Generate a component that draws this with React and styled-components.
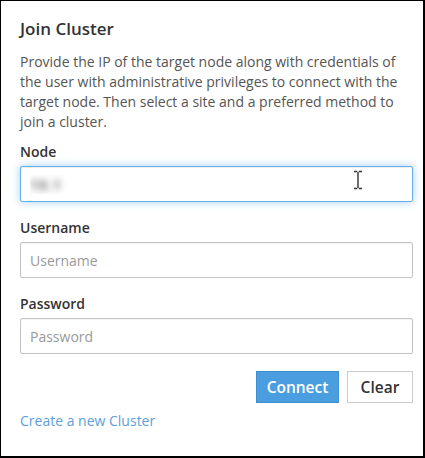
import styled, { createGlobalStyle } from 'styled-components';

const GlobalStyle = createGlobalStyle`
  html, body {
    margin: 0;
    padding: 0;
    background: #fff;
  }
  body {
    font-family: "Open Sans", "Liberation Sans", sans-serif;
  }
  * {
    box-sizing: border-box;
  }
`

const Panel = styled.div`
  width: 425px;
  height: 458px;
  border: 1px solid #000;
  border-right-width: 2px;
  border-bottom-width: 2px;
  padding: 16px 10px 0 19px;
  background: #fff;
  color: #333;
`

const Title = styled.h4`
  margin: 0 0 11px;
  font-size: 17px;
  line-height: 24px;
  font-weight: 600;
  color: #333;
`

const Intro = styled.p`
  margin: 0 0 10px;
  font-size: 14px;
  line-height: 20px;
  color: #555;
`

const Group = styled.div`
  position: relative;
  margin-top: ${p => (p.$first ? '0' : '16px')};
`

const Label = styled.label`
  display: block;
  margin-bottom: 4px;
  font-size: 14px;
  line-height: 20px;
  font-weight: 600;
  color: #333;
`

const Input = styled.input`
  display: block;
  width: 100%;
  height: 36px;
  padding: 6px 9px;
  font-family: inherit;
  font-size: 14px;
  color: #555;
  background: #fff;
  border: 1px solid ${p => (p.$focused ? '#66afe9' : '#c4c4c4')};
  border-radius: 2px;
  outline: none;
  box-shadow: ${p =>
    p.$focused
      ? 'inset 0 1px 1px rgba(0,0,0,.075), 0 0 8px rgba(102,175,233,.6)'
      : 'inset 0 1px 1px rgba(0,0,0,.05)'};
  ${p => p.$masked && `
    color: transparent;
    font-weight: 700;
    letter-spacing: 1px;
    text-shadow: 0 0 7px rgba(0,0,0,.55);
  `}

  &::placeholder {
    color: #999;
  }
`

const Caret = styled.svg`
  position: absolute;
  left: 333px;
  top: 28px;
  pointer-events: none;
`

const Actions = styled.div`
  display: flex;
  justify-content: flex-end;
  gap: 8px;
  margin-top: 17px;
`

const Button = styled.button`
  width: ${p => (p.$primary ? '83px' : '66px')};
  height: 32px;
  padding: 0;
  font-family: inherit;
  font-size: 15.5px;
  font-weight: 600;
  border-radius: 0;
  cursor: pointer;
  color: ${p => (p.$primary ? '#fff' : '#333')};
  background: ${p => (p.$primary ? '#4a9ddf' : '#fff')};
  border: 1px solid ${p => (p.$primary ? '#3d8fd0' : '#ccc')};
`

const Link = styled.a`
  display: inline-block;
  margin-top: 8px;
  font-size: 14px;
  line-height: 20px;
  color: #5c9fd9;
  text-decoration: none;
`

const App = () => {
  return (
    <>
      <GlobalStyle />
      <Panel>
        <Title>Join Cluster</Title>
        <Intro>
          Provide the IP of the target node along with credentials of the user with
          administrative privileges to connect with the target node. Then select a site
          and a preferred method to join a cluster.
        </Intro>
        <Group $first>
          <Label>Node</Label>
          <Input $focused $masked defaultValue="10.1" />
          <Caret width="10" height="20" viewBox="0 0 10 20">
            <path
              d="M1 1.5h3M6 1.5h3M5 2v16M1 18.5h3M6 18.5h3"
              stroke="#fff"
              strokeWidth="3"
              fill="none"
            />
            <path
              d="M1 1.5h3.2M5.8 1.5h3.2M5 2v16M1 18.5h3.2M5.8 18.5h3.2"
              stroke="#333"
              strokeWidth="1.4"
              fill="none"
            />
          </Caret>
        </Group>
        <Group>
          <Label>Username</Label>
          <Input placeholder="Username" />
        </Group>
        <Group>
          <Label>Password</Label>
          <Input type="password" placeholder="Password" />
        </Group>
        <Actions>
          <Button $primary>Connect</Button>
          <Button>Clear</Button>
        </Actions>
        <Link href="#">Create a new Cluster</Link>
      </Panel>
    </>
  )
}

export default App
